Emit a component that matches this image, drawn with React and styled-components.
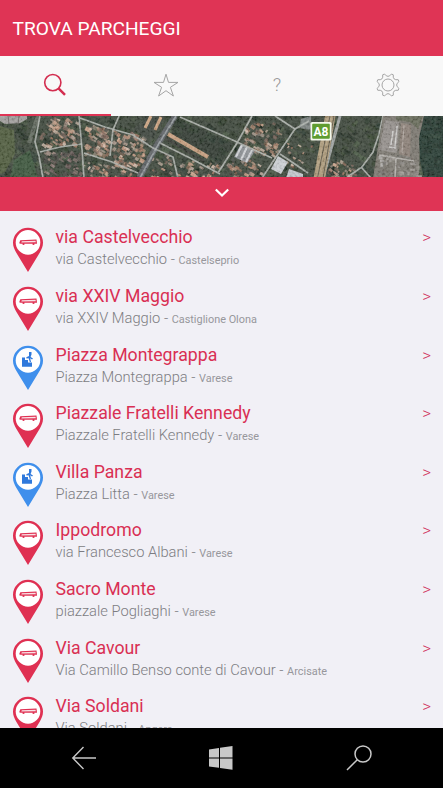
import styled, { createGlobalStyle } from "styled-components";

const GlobalStyle = createGlobalStyle`
  body {
    margin: 0;
    background: #000;
    font-family: Roboto, sans-serif;
  }
`;

const Screen = styled.div`
  width: 443px;
  height: 788px;
  display: flex;
  flex-direction: column;
  overflow: hidden;
  background: #f1f0f6;
`;

const Header = styled.header`
  flex: none;
  height: 56.4px;
  padding-left: 12.5px;
  display: flex;
  align-items: center;
  background: #df3455;
  color: #fff;
  font-size: 19.15px;
`;

const Tabs = styled.nav`
  flex: none;
  height: 59.2px;
  display: flex;
  background: #f8f8f8;
`;

const Tab = styled.div`
  flex: 1;
  box-sizing: border-box;
  display: flex;
  align-items: center;
  justify-content: center;
  color: ${(props) => (props.$active ? "#d32d4f" : "#a5a5a5")};
  border-bottom: 2.5px solid ${(props) => (props.$active ? "#df3455" : "#f8f8f8")};
`;

const Question = styled.span`
  font-size: 18.5px;
  font-weight: 300;
  color: #999;
`;

const Map = styled.div`
  flex: none;
  height: 61.7px;
  overflow: hidden;
`;

const Handle = styled.div`
  flex: none;
  height: 33.7px;
  display: flex;
  align-items: center;
  justify-content: center;
  background: #df3455;

  svg {
    margin-bottom: 2px;
  }
`;

const List = styled.div`
  flex: 1;
  min-height: 0;
  overflow: hidden;
  padding-top: 12.5px;
`;

const Row = styled.div`
  height: 58.6px;
  display: flex;
  padding: 0 12px 0 12px;
`;

const PinBox = styled.div`
  width: 43.5px;
  padding-top: 4px;
`;

const Info = styled.div`
  flex: 1;
  white-space: nowrap;
`;

const Name = styled.div`
  font-size: 17.7px;
  line-height: 28px;
  color: #d92f53;
`;

const Address = styled.div`
  font-size: 14.7px;
  line-height: 17px;
  font-weight: 300;
  color: #7d7d82;
`;

const City = styled.span`
  font-size: 10.9px;
  font-weight: 400;
  color: #97979c;
`;

const More = styled.span`
  font-size: 17px;
  line-height: 28px;
  font-weight: 300;
  color: #d0305a;
`;

const NavBar = styled.footer`
  flex: none;
  height: 60px;
  box-sizing: border-box;
  display: flex;
  align-items: center;
  justify-content: space-between;
  padding: 0 71px;
  background: #000;
`;

const places = [
  { name: "via Castelvecchio", address: "via Castelvecchio", city: "Castelseprio" },
  { name: "via XXIV Maggio", address: "via XXIV Maggio", city: "Castiglione Olona" },
  { name: "Piazza Montegrappa", address: "Piazza Montegrappa", city: "Varese", blue: true },
  { name: "Piazzale Fratelli Kennedy", address: "Piazzale Fratelli Kennedy", city: "Varese" },
  { name: "Villa Panza", address: "Piazza Litta", city: "Varese", blue: true },
  { name: "Ippodromo", address: "via Francesco Albani", city: "Varese" },
  { name: "Sacro Monte", address: "piazzale Pogliaghi", city: "Varese" },
  { name: "Via Cavour", address: "Via Camillo Benso conte di Cavour", city: "Arcisate" },
  { name: "Via Soldani", address: "Via Soldani", city: "Angera" },
];

const SearchIcon = () => (
  <svg width="24" height="24" viewBox="0 0 24 24" fill="none" stroke="currentColor">
    <circle cx="9.8" cy="9.6" r="8.1" strokeWidth="1.6" />
    <path d="M15.5 15.3L22 21.8" strokeWidth="2.4" />
  </svg>
);

const StarIcon = () => (
  <svg width="26" height="24" viewBox="0 0 26 24" fill="none" stroke="currentColor">
    <path d="M13 1.2L15.5 9.4H25L17.4 14.3L20.4 23L13 17.7L5.6 23L8.6 14.3L1 9.4H10.5Z" />
  </svg>
);

const gearPath = () => {
  let d = "";
  for (let i = 0; i < 8; i++) {
    const at = (r, deg) => {
      const a = ((i * 45 + 22.5 + deg) * Math.PI) / 180;
      return (12 + r * Math.cos(a)).toFixed(2) + " " + (12 + r * Math.sin(a)).toFixed(2);
    };
    d += (i ? "L" : "M") + at(11.5, -5) + "L" + at(11.5, 5) + "Q" + at(6.3, 22.5) + " " + at(11.5, 40);
  }
  return d + "Z";
};

const GearIcon = () => (
  <svg width="24" height="24" viewBox="0 0 24 24" fill="none" stroke="currentColor" strokeLinejoin="round">
    <path d={gearPath()} />
    <circle cx="12" cy="12" r="6" />
  </svg>
);

const Pin = ({ blue }) => {
  const color = blue ? "#3f8fec" : "#df3052";
  return (
    <svg width="32" height="46" viewBox="0 0 32 46">
      <path d="M16 .8A15 15 0 0 0 1 15.8C1 19.5 2.5 22.5 4 25.3L16 45L28 25.3C29.5 22.5 31 19.5 31 15.8A15 15 0 0 0 16 .8Z" fill={color} />
      <circle cx="16" cy="15.4" r="12.3" fill="#fff" />
      {blue ? (
        <path d="M10 12.5H13V15H16V17.5H20V21.8H10ZM17 7H19.5V9.5L18.6 12L21 13.5L20 14.4L18.2 13.3L19 17H17.8L16.6 13.2L14.5 13.4L14.3 12.3L17 11Z" fill="#2f79dc" />
      ) : (
        <g>
          <path d="M8.3 13.3L24.5 12.6L25 16.8H8.5L7.2 16.2Z" fill={color} />
          <path d="M9.8 14.2L23.5 13.7L23.8 15.3L9.3 15.6Z" fill="#fff" opacity=".85" />
          <circle cx="11.5" cy="17" r="1.1" fill={color} />
          <circle cx="21.5" cy="17" r="1.1" fill={color} />
        </g>
      )}
    </svg>
  );
};

// repeatable pseudo random so that the blocks never move between renders
const scatter = (seed, count, x, y, w, h, colors, size) => {
  let s = seed * 7919;
  const next = () => {
    s = (s * 16807) % 2147483647;
    return s / 2147483647;
  };
  const out = [];
  for (let i = 0; i < count; i++) {
    const px = x + next() * w;
    const py = y + next() * h;
    out.push({
      x: px,
      y: py,
      w: size * (0.5 + next()),
      h: size * (0.4 + next() * 0.7),
      turn: 25 + next() * 15,
      fill: colors[Math.floor(next() * colors.length)],
      opacity: 0.5 + next() * 0.5,
    });
  }
  return out;
};

const greens = ["#2f3c2c", "#35452f", "#243026", "#3e4b38", "#4a5a44", "#2d3d33"];
const roofs = ["#b58a72", "#9a6f5a", "#cda58c", "#80665b", "#ae9b8e", "#4c4f48", "#d8bfae"];
const greys = ["#8c8883", "#a19c97", "#77746f", "#b5b3b0", "#6f6861"];

const patches = [
  ...scatter(11, 520, -4, -3, 446, 66, greens, 6),
  ...scatter(23, 75, 41, 1, 38, 28, roofs, 4),
  ...scatter(29, 55, 43, 34, 38, 27, ["#6a5b58", "#8a7672", "#4b4945", "#a08a80"], 4),
  ...scatter(37, 70, 86, 7, 28, 30, roofs, 4),
  ...scatter(41, 95, 114, 15, 30, 34, roofs, 4),
  ...scatter(43, 45, 82, 44, 50, 18, roofs, 3.5),
  ...scatter(47, 20, 152, 36, 20, 24, roofs, 3.5),
  ...scatter(53, 40, 178, 44, 42, 18, roofs, 3.5),
  ...scatter(57, 75, 244, 6, 34, 32, roofs, 3.5),
  ...scatter(61, 45, 228, 40, 34, 22, roofs, 3.5),
  ...scatter(67, 18, 286, 24, 26, 26, roofs, 2.5),
  ...scatter(71, 35, 328, 42, 26, 18, roofs, 3),
];

const roads = [
  "M40 0L35 26L39 40L43 62",
  "M40 36L60 31L82 28",
  "M79 0L82 33L84 62",
  "M80 2L105 11L133 19L153 32L173 41L178 62",
  "M84 37L112 46L138 57",
  "M119 0L113 14L110 40",
  "M160 27L190 42L220 58",
  "M180 1L210 14L237 26L272 42",
  "M218 57L237 27L252 0",
  "M275 0L295 13L278 38L262 62",
  "M295 13L309 5",
  "M280 38L308 57",
  "M383 0L379 18L373 36L362 51L346 62",
  "M361 51L371 62",
];

const Satellite = () => (
  <svg width="443" height="62" viewBox="0 0 443 62">
    <defs>
      <filter id="soft" x="0" y="0" width="100%" height="100%">
        <feGaussianBlur stdDeviation=".55" />
      </filter>
      <filter id="grain" x="0" y="0" width="100%" height="100%">
        <feTurbulence type="fractalNoise" baseFrequency="0.4" numOctaves="2" seed="8" />
        <feColorMatrix values="1.8 0 0 0 -.5  1.8 0 0 0 -.5  1.8 0 0 0 -.5  0 0 0 0 .14" />
      </filter>
    </defs>
    <g filter="url(#soft)">
      <rect width="443" height="62" fill="#3d463a" />
      {patches.map((p, i) => (
        <rect
          key={i}
          x={p.x}
          y={p.y}
          width={p.w}
          height={p.h}
          fill={p.fill}
          opacity={p.opacity}
          transform={`rotate(${p.turn} ${p.x} ${p.y})`}
        />
      ))}
      <path d="M0 10L14 14L15 38L5 56L0 58Z" fill="#53603f" opacity=".85" />
      <path d="M14 44L30 34L38 62H10Z" fill="#3b5a3c" opacity=".7" />
      <path d="M0 0H27V3L20 7L5 8L0 5Z" fill="#b5b0b2" opacity=".85" />
      <path d="M8 0L9 8M19 0L18 8" stroke="#67635f" />
      <path d="M38 0L29 27" stroke="#7d8379" strokeWidth="4" opacity=".6" />
      <path d="M134 12L152 0H165L150 28Z" fill="#3f4440" opacity=".6" />
      <path d="M151 0L145 12M161 1L155 14" stroke="#d2a884" strokeWidth="3" />
      <path d="M178 3L234 28L220 48L170 20Z" fill="#26332a" opacity=".55" />
      <path d="M168 18L208 41" stroke="#c9a07f" strokeWidth="4" />
      <path d="M165 22L204 45" stroke="#383b34" strokeWidth="3" />
      <path d="M175 0L157 29L139 62" stroke="#5b6064" strokeWidth="6" fill="none" />
      <path d="M176 0L158 29L140 62" stroke="#979da0" strokeWidth="1.6" fill="none" />
      <path d="M241 28L255 35L247 47L234 41Z" fill="#8d9195" />
      <path d="M242 29L236 41M247 31L241 44M252 34L246 46" stroke="#d5d7da" strokeWidth="2" />
      <path d="M278 40L288 46L281 58L271 53Z" fill="#cdd1d5" />
      <path d="M289 53L303 58V62H286Z" fill="#c4c9ce" />
      <path d="M301 3L311 0V14L299 12Z" fill="#8c9293" opacity=".8" />
      {roads.map((d) => (
        <path key={d} d={d} fill="none" stroke="#b3b7b1" strokeWidth="1.7" opacity=".9" />
      ))}
      <path d="M383 0H424L420 28L419 62H373L378 30Z" fill="#7c786f" />
      {scatter(83, 45, 378, 36, 40, 24, greys, 4).map((p, i) => (
        <rect key={i} x={p.x} y={p.y} width={p.w} height={p.h} fill={p.fill} opacity={p.opacity} />
      ))}
      <path d="M385 4L399 6L397 37L379 34Z" fill="#96918d" />
      <path d="M401 7L411 9L410 41L399 38Z" fill="#8d8178" />
      <path d="M393 15L391 29M397 10L395 31M389 31L396 32" stroke="#d0cfcd" strokeWidth="1.5" />
      <path d="M404 9L402 37" stroke="#b5aba4" />
      <path d="M379 39L414 45M396 42L395 62" stroke="#b5b2ad" strokeWidth="1.5" />
      <path d="M396 0H423L418 13L410 6L396 4Z" fill="#666a59" />
      <path d="M424 0H443V62H424L420 44L419 22Z" fill="#263a30" />
      {scatter(101, 60, 421, -2, 24, 64, ["#20302a", "#304538", "#1c2b25"], 5).map((p, i) => (
        <rect key={i} x={p.x} y={p.y} width={p.w} height={p.h} fill={p.fill} opacity=".6" />
      ))}
      <path d="M340 0L323 62" stroke="#a1a6a4" strokeWidth="3" />
      <path d="M325 0H335.500L325 62H313.500Z" fill="#b09d7c" />
      <path d="M330 0L317.500 62M334 0L323 62" stroke="#5e5746" strokeWidth="1" />
    </g>
    <rect width="443" height="62" filter="url(#grain)" />
    <rect x="310.5" y="6" width="21" height="18.500" rx="1.500" fill="#f3f7eb" />
    <rect x="312.200" y="7.700" width="17.600" height="15" rx="1" fill="#5f9c30" />
    <text x="321" y="19.500" textAnchor="middle" fontSize="12" fontWeight="700" fill="#fff" fontFamily="Roboto, sans-serif">
      A8
    </text>
  </svg>
);

const App = () => {
  return (
    <Screen>
      <GlobalStyle />
      <Header>TROVA PARCHEGGI</Header>

      <Tabs>
        <Tab $active><SearchIcon /></Tab>
        <Tab><StarIcon /></Tab>
        <Tab><Question>?</Question></Tab>
        <Tab><GearIcon /></Tab>
      </Tabs>

      <Map>
        <Satellite />
      </Map>
      <Handle>
        <svg width="16" height="10" viewBox="0 0 16 10" fill="none" stroke="#fff" strokeWidth="2.2">
          <path d="M1.8 1.5L8 7.5L14.2 1.5" />
        </svg>
      </Handle>

      <List>
        {places.map((place) => (
          <Row key={place.name}>
            <PinBox><Pin blue={place.blue} /></PinBox>
            <Info>
              <Name>{place.name}</Name>
              <Address>
                {place.address} - <City>{place.city}</City>
              </Address>
            </Info>
            <More>&gt;</More>
          </Row>
        ))}
      </List>

      <NavBar>
        <svg width="26" height="26" viewBox="0 0 26 26" fill="none" stroke="#c8c8c8" strokeWidth="1.4">
          <path d="M25 13H2M12.5 2L1.8 13L12.5 24" />
        </svg>
        <svg width="26" height="24" viewBox="0 0 26 24" fill="#c8c8c8">
          <path d="M0 3.5L10 2V11.4H0ZM11 1.8L23.5 0V11.4H11ZM0 12.4H10V21.8L0 20.4ZM11 12.4H23.5V23.8L11 22Z" />
        </svg>
        <svg width="26" height="26" viewBox="0 0 26 26" fill="none" stroke="#c8c8c8" strokeWidth="1.5">
          <circle cx="17" cy="9" r="8" />
          <path d="M11.3 14.7L1 25" />
        </svg>
      </NavBar>
    </Screen>
  );
};

export default App;
